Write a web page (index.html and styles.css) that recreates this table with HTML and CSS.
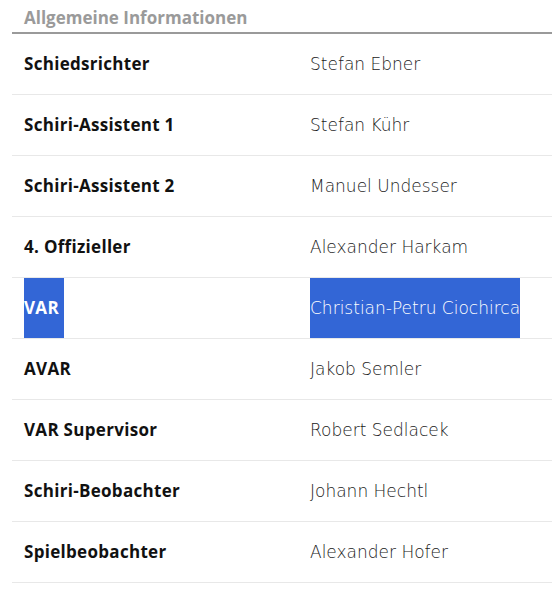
FILE: index.html
```html
<!DOCTYPE html>
<html lang="de">
<head>
<meta charset="utf-8">
<title>Allgemeine Informationen</title>
<link rel="stylesheet" href="styles.css">
</head>
<body>
<section class="info">
  <h2 class="info-title">Allgemeine Informationen</h2>
  <div class="info-table">
    <div class="row"><div class="label">Schiedsrichter</div><div class="value">Stefan Ebner</div></div>
    <div class="row"><div class="label">Schiri-Assistent 1</div><div class="value">Stefan Kühr</div></div>
    <div class="row"><div class="label">Schiri-Assistent 2</div><div class="value">Manuel Undesser</div></div>
    <div class="row"><div class="label">4. Offizieller</div><div class="value">Alexander Harkam</div></div>
    <div class="row"><div class="label"><span class="sel sel-label">VAR</span></div><div class="value"><span class="sel">Christian-Petru Ciochirca</span></div></div>
    <div class="row"><div class="label">AVAR</div><div class="value">Jakob Semler</div></div>
    <div class="row"><div class="label">VAR Supervisor</div><div class="value">Robert Sedlacek</div></div>
    <div class="row"><div class="label">Schiri-Beobachter</div><div class="value">Johann Hechtl</div></div>
    <div class="row"><div class="label">Spielbeobachter</div><div class="value">Alexander Hofer</div></div>
  </div>
</section>
</body>
</html>
```
FILE: styles.css
```css
html, body {
  margin: 0;
  padding: 0;
  background: #ffffff;
}
body {
  font-family: "Open Sans", Lato, sans-serif;
}
.info {
  padding-left: 12px;
}
.info-title {
  margin: 0;
  padding: 4px 12px 0;
  box-sizing: content-box;
  height: 28px;
  font-size: 17px;
  font-weight: 700;
  line-height: 28px;
  color: #9a9a9a;
  border-bottom: 2px solid #9a9a9a;
}
.row {
  display: grid;
  grid-template-columns: 298px 1fr;
  height: 60px;
  border-bottom: 1px solid #e8e8e8;
}
.label {
  padding-left: 12px;
  font-size: 17px;
  font-weight: 700;
  letter-spacing: 0.3px;
  color: #111111;
  line-height: 60px;
  white-space: nowrap;
}
.value {
  font-family: "DejaVu Sans", "Open Sans", sans-serif;
  font-size: 17px;
  font-weight: 200;
  color: #222222;
  line-height: 60px;
  white-space: nowrap;
}
.sel {
  display: inline-block;
  background: #3366d6;
  color: #ffffff;
  line-height: 60px;
  vertical-align: top;
}
.sel-label {
  padding-right: 5px;
}
```
